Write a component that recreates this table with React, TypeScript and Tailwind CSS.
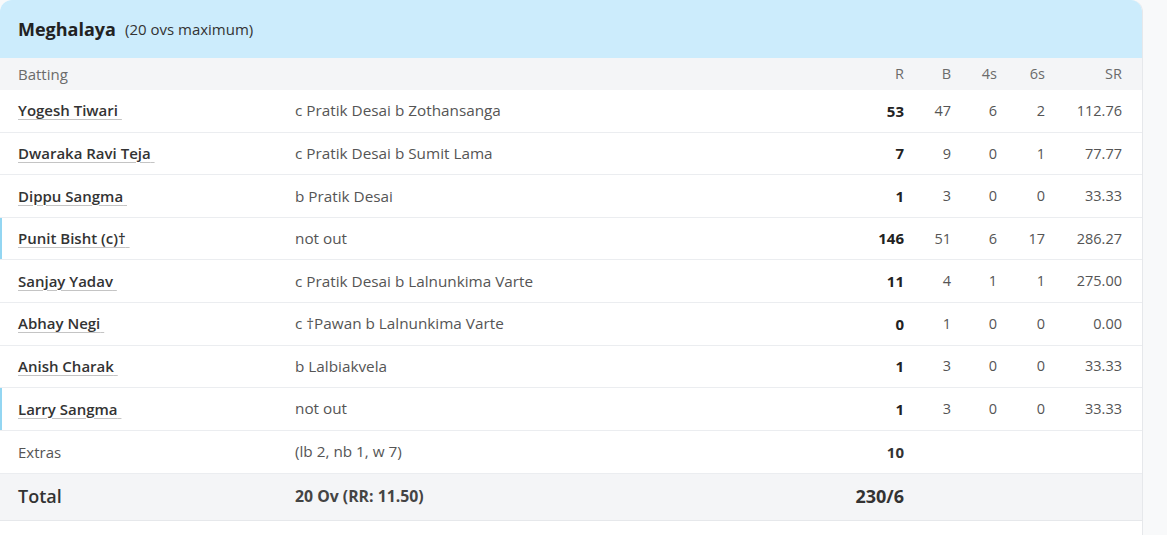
import React from "react";

type Batter = {
  name: string;
  dismissal: string;
  r: number;
  b: number;
  fours: number;
  sixes: number;
  sr: string;
  notOut?: boolean;
};

const batters: Batter[] = [
  { name: "Yogesh Tiwari", dismissal: "c Pratik Desai b Zothansanga", r: 53, b: 47, fours: 6, sixes: 2, sr: "112.76" },
  { name: "Dwaraka Ravi Teja", dismissal: "c Pratik Desai b Sumit Lama", r: 7, b: 9, fours: 0, sixes: 1, sr: "77.77" },
  { name: "Dippu Sangma", dismissal: "b Pratik Desai", r: 1, b: 3, fours: 0, sixes: 0, sr: "33.33" },
  { name: "Punit Bisht (c)†", dismissal: "not out", r: 146, b: 51, fours: 6, sixes: 17, sr: "286.27", notOut: true },
  { name: "Sanjay Yadav", dismissal: "c Pratik Desai b Lalnunkima Varte", r: 11, b: 4, fours: 1, sixes: 1, sr: "275.00" },
  { name: "Abhay Negi", dismissal: "c †Pawan b Lalnunkima Varte", r: 0, b: 1, fours: 0, sixes: 0, sr: "0.00" },
  { name: "Anish Charak", dismissal: "b Lalbiakvela", r: 1, b: 3, fours: 0, sixes: 0, sr: "33.33" },
  { name: "Larry Sangma", dismissal: "not out", r: 1, b: 3, fours: 0, sixes: 0, sr: "33.33", notOut: true },
];

const cols = "grid grid-cols-[277px_1fr_60px_47px_46px_48px_77px] items-center pl-[18px] pr-[20px]";

export default function App() {
  return (
    <div className="min-h-[535px] w-full bg-[#f8f9fa] text-[14.5px]" style={{ fontFamily: '"Open Sans", "Noto Sans", sans-serif' }}>
      <div className="w-[1143px] bg-white rounded-t-[12px] border-r border-[#e6e8eb] overflow-hidden">
        {/* Innings header */}
        <div className="h-[58px] bg-[#ccecfc] flex items-center pl-[18px] gap-[9px]">
          <span className="text-[18px] font-bold text-[#222]">Meghalaya</span>
          <span className="text-[15px] text-[#333]">(20 ovs maximum)</span>
        </div>

        {/* Column headings */}
        <div className={`${cols} h-[32px] bg-[#f4f5f7] text-[#6b6b6b]`}>
          <span className="text-[15px]">Batting</span>
          <span></span>
          <span className="text-right">R</span>
          <span className="text-right">B</span>
          <span className="text-right">4s</span>
          <span className="text-right">6s</span>
          <span className="text-right">SR</span>
        </div>

        {batters.map((p) => (
          <div
            key={p.name}
            className={`${cols} h-[42.6px] border-b border-[#ebedf0] text-[#555] ${p.notOut ? "shadow-[inset_2px_0_0_#93d6f2]" : ""}`}
          >
            <span>
              <span className="text-[15px] font-semibold text-[#333] underline decoration-[#c4c4c4] decoration-1 underline-offset-[3px]">
                {p.name}{"\u00a0"}
              </span>
            </span>
            <span className="text-[15.3px]">{p.dismissal}</span>
            <span className="text-right text-[15px] font-bold text-[#222]">{p.r}</span>
            <span className="text-right">{p.b}</span>
            <span className="text-right">{p.fours}</span>
            <span className="text-right">{p.sixes}</span>
            <span className="text-right">{p.sr}</span>
          </div>
        ))}

        {/* Extras */}
        <div className={`${cols} h-[43px] border-b border-[#ebedf0] text-[#555]`}>
          <span className="text-[15px]">Extras</span>
          <span className="text-[15.3px]">(lb 2, nb 1, w 7)</span>
          <span className="text-right text-[15px] font-bold text-[#333]">10</span>
          <span></span>
          <span></span>
          <span></span>
          <span></span>
        </div>

        {/* Total */}
        <div className={`${cols} h-[47px] bg-[#f4f5f7] border-b border-[#e6e8eb] text-[#444]`}>
          <span className="text-[18px] font-semibold text-[#333]">Total</span>
          <span className="text-[15.8px] font-bold">20 Ov (RR: 11.50)</span>
          <span className="text-right text-[18px] font-bold text-[#333]">230/6</span>
          <span></span>
          <span></span>
          <span></span>
          <span></span>
        </div>
        <div className="h-[20px] bg-white"></div>
      </div>
    </div>
  );
}
